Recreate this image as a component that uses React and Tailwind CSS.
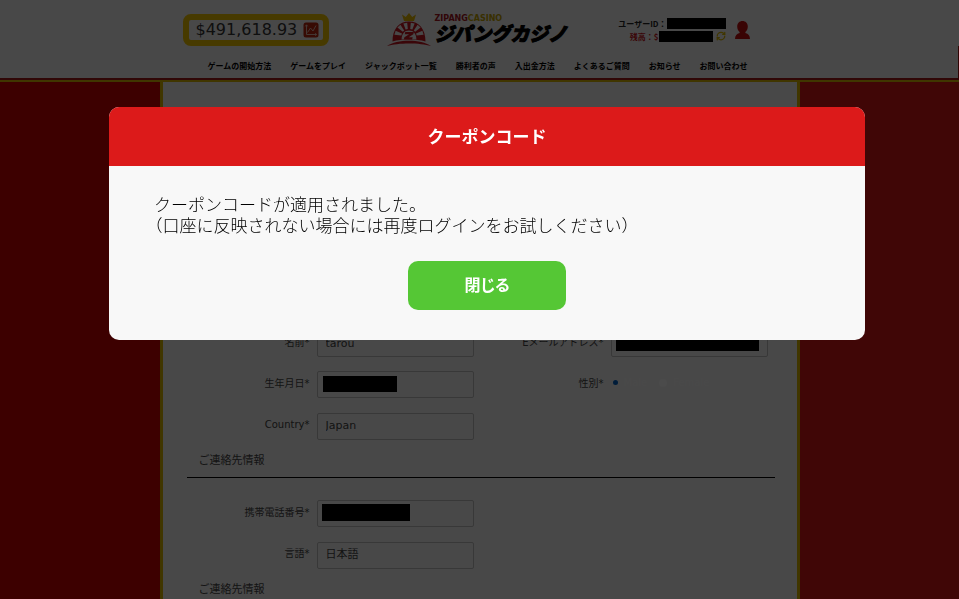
import React from 'react';
import { RefreshCw } from 'lucide-react';

const NAV = [
  'ゲームの開始方法',
  'ゲームをプレイ',
  'ジャックポット一覧',
  '勝利者の声',
  '入出金方法',
  'よくあるご質問',
  'お知らせ',
  'お問い合わせ',
];

const FIELD = 'h-[27px] w-full rounded-xs border border-[#bbb] bg-transparent px-2 text-[11px] text-[#444] appearance-none';

function SunLogo() {
  return (
    <svg className="h-[34px] w-[44px] shrink-0" viewBox="0 0 44 34" aria-hidden="true">
      <path d="M15 1.500l3.800 2.500 3.200-4 3.200 4 3.800-2.500-2 6.500h-10z" fill="#e0b400" />
      <path d="M5.500 28.500C5.500 16 12 8.500 22 8.500S38.500 16 38.500 28.500c-9-2.600-24-2.600-33 0z" fill="#c41420" />
      <g fill="#f0f0f0">
        <path d="M14.300 22.600L7.400 21.800 8.600 17.800 15 20.600z" />
        <path d="M15.800 18.800L10.400 14.600 13.400 11.800 17.200 17.400z" />
        <path d="M18.600 16.600L16.400 10.600 20.200 9.800 20.800 16z" />
        <path d="M25.400 16.600L27.600 10.600 23.800 9.800 23.200 16z" />
        <path d="M28.200 18.800L33.600 14.600 30.600 11.800 26.800 17.400z" />
        <path d="M29.700 22.600L36.600 21.800 35.400 17.800 29 20.600z" />
        <path d="M14.600 26.600C14.600 21 17.500 17.600 22 17.600S29.400 21 29.400 26.600c-5-.7-10-.7-14.800 0z" />
      </g>
      <path d="M18.300 19h8.600l-.6 2.200-4.600 3h4l-.6 2.200h-8.300l.6-2.200 4.700-3h-4.400z" fill="#c41420" />
      <path d="M0 33C10 26 34 26 44 33C33 29.600 11 29.600 0 33z" fill="#c41420" />
    </svg>
  );
}

function ChartIcon() {
  return (
    <svg className="size-4" viewBox="0 0 16 16" aria-hidden="true">
      <rect x="0.5" y="0.5" width="15" height="15" rx="2.5" fill="#b8260f" />
      <path d="M3.5 3v9.500h10M2.300 4.400L3.500 2.800l1.200 1.600M12.200 11.300l1.500 1.200-1.500 1.200" fill="none" stroke="#e0b8ac" strokeWidth="1" />
      <path d="M4.500 10.500l3-4.500 2.500 3 3-5.500" fill="none" stroke="#e0b8ac" strokeWidth="1" />
    </svg>
  );
}

function Header() {
  return (
    <header className="relative border-b-2 border-[#d5b400] bg-[#f0f0f0]">
      <div className="border-b-2 border-[#a01818]">
        <div className="mx-auto h-[78px] max-w-[640px] pt-[13px]">
          <div className="flex h-[34px] items-center pr-[50px] pl-[23px]">
            <a href="#jackpot" className="flex h-8 w-[146px] items-center justify-between rounded-lg border-6 border-[#eec200] pr-1 pl-[7px] text-base whitespace-nowrap text-[#333]">
              $491,618.93
              <ChartIcon />
            </a>
            <a href="#home" className="ml-[58px] flex items-start gap-1">
              <SunLogo />
              <span className="flex flex-col pt-px whitespace-nowrap">
                <span className="text-[8px] leading-[9px] font-bold text-[#a41420]">
                  ZIPANG<span className="text-[#c0a000]">CASINO</span>
                </span>
                <span className="text-[19px] leading-[22px] font-black text-black italic [-webkit-text-stroke:1px_black]">ジパングカジノ</span>
              </span>
            </a>
            <div className="ml-auto flex items-center gap-[9px]">
              <div className="flex flex-col items-end gap-0.5 font-['Noto_Sans_CJK_JP',sans-serif] text-[8px] leading-[11px] font-bold whitespace-nowrap text-[#222]">
                <div className="flex">
                  ユーザーID：
                  <span className="h-[11px] w-[59px] bg-black" />
                </div>
                <div className="flex text-[#c41420]">
                  残高：$
                  <span className="h-[11px] w-[54px] bg-black" />
                  <button type="button" aria-label="残高を更新" className="ml-[3px] h-[10px] text-[#d5b400]">
                    <RefreshCw className="size-[10px]" strokeWidth={3} />
                  </button>
                </div>
              </div>
              <svg className="h-[18px] w-[15px]" viewBox="0 0 15 18" aria-hidden="true">
                <path d="M7.500 0C10.500 0 12.800 2.200 12.800 5.400 12.800 8 11.800 9.800 10.400 11V12C13.200 12.800 15 14.600 15 18H0C0 14.600 1.800 12.800 4.600 12V11C3.200 9.800 2.200 8 2.200 5.400 2.200 2.200 4.500 0 7.500 0z" fill="#c01010" />
              </svg>
            </div>
          </div>
          <nav className="flex justify-between pt-[14px] pr-[52px] pl-12 text-[8px] leading-[12px] font-bold whitespace-nowrap text-black">
            {NAV.map((item) => (
              <a key={item} href="#menu">{item}</a>
            ))}
          </nav>
        </div>
      </div>
      <div className="absolute right-0 bottom-0 h-[34px] w-px bg-[#a01010]" />
    </header>
  );
}

function Field({ id, label, wide, children }) {
  return (
    <div className="flex items-center gap-[7px]">
      <label htmlFor={id} className={(wide ? 'w-[130px]' : 'w-[123px]') + ' pb-0.5 text-right text-[10px] whitespace-nowrap text-[#444]'}>
        {label}
      </label>
      <div className="relative w-[157px]">{children}</div>
    </div>
  );
}

function SectionTitle({ children }) {
  return <h2 className="mt-3 border-b border-black pb-2 pl-3 text-[11px] leading-[17px] text-[#444]">{children}</h2>;
}

function AccountForm() {
  return (
    <form className="w-[640px] shrink-0 border-x-3 border-[#d5b400] bg-[#f0f0f0] pt-[248px] pr-[22px] pl-6">
      <div className="flex">
        <div className="flex flex-col gap-[14px]">
          <Field id="name" label="名前*">
            <input id="name" defaultValue="tarou" className={FIELD} />
          </Field>
          <Field id="birthday" label="生年月日*">
            <input id="birthday" className={FIELD} />
            <span className="absolute top-[5px] left-[6px] h-4 w-[74px] bg-black" />
          </Field>
          <Field id="country" label="Country*">
            <select id="country" className={FIELD}>
              <option>Japan</option>
            </select>
          </Field>
        </div>
        <div className="flex flex-col gap-[14px]">
          <Field id="email" label="Eメールアドレス*" wide>
            <input id="email" type="email" className={FIELD} />
            <span className="absolute top-[10px] left-[5px] h-[11px] w-[143px] bg-black" />
          </Field>
          <Field id="male" label="性別*" wide>
            <div className="flex h-[27px] items-center gap-1.5 pb-1 pl-0.5 text-[10px] text-[#f6f6f6]">
              <input id="male" type="radio" name="gender" defaultChecked className="size-[5px] appearance-none rounded-full bg-[#0060c0]" />
              <label htmlFor="male" className="mr-1.5">Male</label>
              <input id="female" type="radio" name="gender" className="size-2 appearance-none rounded-full bg-[#fafafa]" />
              <label htmlFor="female">Female</label>
            </div>
          </Field>
        </div>
      </div>
      <SectionTitle>ご連絡先情報</SectionTitle>
      <div className="mt-[22px] flex flex-col gap-[14px]">
        <Field id="phone" label="携帯電話番号*">
          <input id="phone" type="tel" className={FIELD} />
          <span className="absolute top-[4px] left-[5px] h-[17px] w-[88px] bg-black" />
        </Field>
        <Field id="language" label="言語*">
          <select id="language" className={FIELD}>
            <option>日本語</option>
          </select>
        </Field>
      </div>
      <SectionTitle>ご連絡先情報</SectionTitle>
    </form>
  );
}

function CouponDialog() {
  return (
    <div className="fixed inset-0 flex items-start justify-center bg-black/70 pt-[107px] pl-[15px]">
      <div role="dialog" aria-labelledby="coupon-title" className="w-full max-w-[756px] overflow-hidden rounded-[10px] bg-[#f8f8f8]">
        <h1 id="coupon-title" className="bg-[#dc1a1a] pt-0.5 text-center text-[17px] leading-[57px] font-bold text-white">
          クーポンコード
        </h1>
        <div className="flex flex-col px-[45px] pt-[29px] pb-[30px]">
          <p className="text-[17px] leading-[21px] font-light text-black [text-spacing-trim:trim-start]">
            クーポンコードが適用されました。
            <br />
            （口座に反映されない場合には再度ログインをお試しください）
          </p>
          <button type="button" className="mt-6 h-[49px] w-[158px] self-center rounded-[10px] bg-[#55c735] text-base font-bold text-white [font-feature-settings:'palt']">
            閉じる
          </button>
        </div>
      </div>
    </div>
  );
}

function App() {
  return (
    <div lang="ja" className="flex h-screen flex-col overflow-hidden font-['DejaVu_Sans','Noto_Sans_CJK_JP',sans-serif]">
      <Header />
      <main className="flex flex-grow">
        <div className="flex-1 bg-[#cb0000]" />
        <AccountForm />
        <div className="flex-1 bg-[#d51414]" />
      </main>
      <CouponDialog />
    </div>
  );
}

export default App;
